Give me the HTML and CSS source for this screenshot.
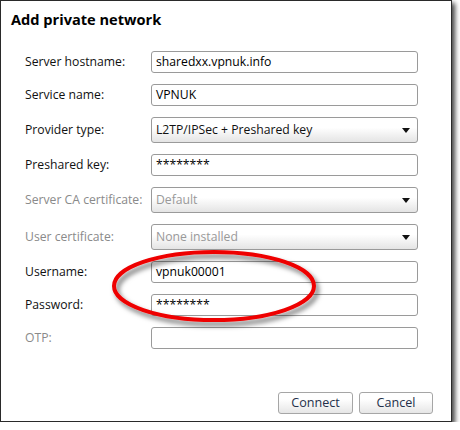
FILE: index.html
```html
<!DOCTYPE html>
<html>
<head>
<meta charset="utf-8">
<link rel="stylesheet" href="styles.css">
</head>
<body>
<div class="dialog">
  <h1 class="title">Add private network</h1>
  <div class="form">
    <div class="label">Server hostname:</div>
    <div class="field">sharedxx.vpnuk.info</div>

    <div class="label">Service name:</div>
    <div class="field">VPNUK</div>

    <div class="label">Provider type:</div>
    <div class="select"><span>L2TP/IPSec + Preshared key</span><i class="arrow"></i></div>

    <div class="label">Preshared key:</div>
    <div class="field">********</div>

    <div class="label disabled">Server CA certificate:</div>
    <div class="select disabled"><span>Default</span><i class="arrow"></i></div>

    <div class="label disabled">User certificate:</div>
    <div class="select disabled"><span>None installed</span><i class="arrow"></i></div>

    <div class="label">Username:</div>
    <div class="field">vpnuk00001</div>

    <div class="label">Password:</div>
    <div class="field">********</div>

    <div class="label disabled">OTP:</div>
    <div class="field"></div>
  </div>
  <div class="buttons">
    <div class="button">Connect</div>
    <div class="button">Cancel</div>
  </div>
  <svg class="circle" width="230" height="90" viewBox="0 0 230 90">
    <defs>
      <filter id="sh" x="-20%" y="-30%" width="140%" height="160%">
        <feGaussianBlur in="SourceAlpha" stdDeviation="2.5"/>
        <feOffset dx="3" dy="4" result="b"/>
        <feFlood flood-color="#000" flood-opacity="0.55"/>
        <feComposite in2="b" operator="in"/>
        <feMerge><feMergeNode/><feMergeNode in="SourceGraphic"/></feMerge>
      </filter>
    </defs>
    <ellipse cx="112" cy="42" rx="100" ry="34" fill="none" stroke="#ee0000" stroke-width="4" filter="url(#sh)"/>
  </svg>
</div>
</body>
</html>
```

FILE: styles.css
```css
html, body {
  margin: 0;
  padding: 0;
  background: #ffffff;
}
body {
  font-family: "Open Sans", "Noto Sans", sans-serif;
  color: #000;
}
.dialog {
  position: relative;
  box-sizing: border-box;
  width: 452px;
  height: 422px;
  background: #fff;
  border: 1px solid #2a2a2a;
  box-shadow: 3px 3px 5px rgba(0, 0, 0, 0.75);
  display: flex;
  flex-direction: column;
}
.title {
  margin: 0;
  padding: 6px 0 0 10px;
  font-size: 14.6px;
  font-weight: bold;
  line-height: 24px;
}
.form {
  display: grid;
  grid-template-columns: 126px 267px;
  row-gap: 11px;
  align-items: center;
  padding: 20px 0 0 24px;
}
.label {
  font-size: 12.2px;
  line-height: 18px;
  color: #111;
}
.label.disabled {
  color: #8a8a8a;
}
.field {
  box-sizing: border-box;
  height: 22px;
  border: 1px solid #9a9a9a;
  border-radius: 3px;
  background: #fff;
  font-size: 12.2px;
  line-height: 20px;
  padding: 0 4px;
}
.select {
  box-sizing: border-box;
  height: 26px;
  border: 1px solid #9a9a9a;
  border-radius: 3px;
  background: linear-gradient(#ffffff 40%, #e4e4e4);
  font-size: 12.2px;
  line-height: 24px;
  padding: 0 4px;
  display: flex;
  justify-content: space-between;
  align-items: center;
  color: #111;
}
.select.disabled {
  color: #999;
}
.arrow {
  width: 0;
  height: 0;
  border-left: 4px solid transparent;
  border-right: 4px solid transparent;
  border-top: 5px solid #111;
  margin-right: 3px;
}
.buttons {
  margin-top: auto;
  display: flex;
  justify-content: flex-end;
  gap: 6px;
  padding: 0 18px 7px 0;
}
.button {
  box-sizing: border-box;
  height: 22px;
  width: 75px;
  border: 1px solid #a6a6a6;
  border-radius: 3px;
  background: linear-gradient(#ffffff 30%, #e6e6e6);
  font-size: 12.6px;
  line-height: 20px;
  text-align: center;
  color: #24304a;
}
.button + .button {
  width: 74px;
}
.circle {
  position: absolute;
  left: 101px;
  top: 243px;
}
```
